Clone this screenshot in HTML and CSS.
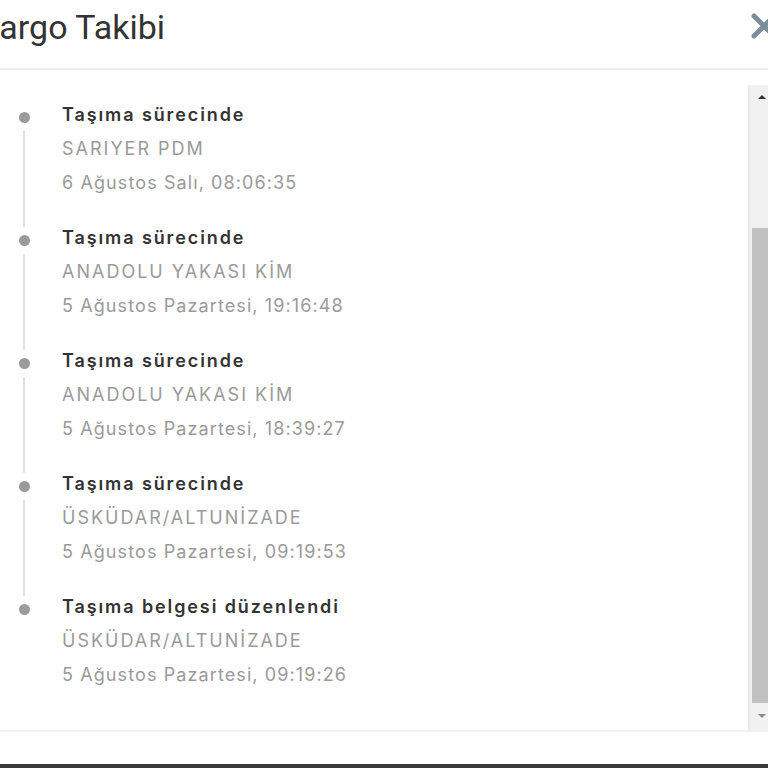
FILE: index.html
```html
<!DOCTYPE html>
<html lang="tr">
<head>
<meta charset="utf-8">
<link rel="stylesheet" href="styles.css">
</head>
<body>
<div class="modal">
  <header class="head">
    <h1 class="title">Kargo Takibi</h1>
    <svg class="close" width="28" height="28" viewBox="0 0 28 28"><path d="M4 4 L24 24 M24 4 L4 24" stroke="#7d8c9b" stroke-width="5" stroke-linecap="round"/></svg>
  </header>
  <div class="body">
    <div class="list">
      <div class="item">
        <div class="rail"><span class="dot"></span><span class="line"></span></div>
        <div class="text"><div class="status">Taşıma sürecinde</div><div class="place">SARIYER PDM</div><div class="date">6 Ağustos Salı, 08:06:35</div></div>
      </div>
      <div class="item">
        <div class="rail"><span class="dot"></span><span class="line"></span></div>
        <div class="text"><div class="status">Taşıma sürecinde</div><div class="place">ANADOLU YAKASI KİM</div><div class="date">5 Ağustos Pazartesi, 19:16:48</div></div>
      </div>
      <div class="item">
        <div class="rail"><span class="dot"></span><span class="line"></span></div>
        <div class="text"><div class="status">Taşıma sürecinde</div><div class="place">ANADOLU YAKASI KİM</div><div class="date">5 Ağustos Pazartesi, 18:39:27</div></div>
      </div>
      <div class="item">
        <div class="rail"><span class="dot"></span><span class="line"></span></div>
        <div class="text"><div class="status">Taşıma sürecinde</div><div class="place">ÜSKÜDAR/ALTUNİZADE</div><div class="date">5 Ağustos Pazartesi, 09:19:53</div></div>
      </div>
      <div class="item">
        <div class="rail"><span class="dot"></span></div>
        <div class="text"><div class="status">Taşıma belgesi düzenlendi</div><div class="place">ÜSKÜDAR/ALTUNİZADE</div><div class="date">5 Ağustos Pazartesi, 09:19:26</div></div>
      </div>
    </div>
    <div class="scrollbar">
      <div class="btn up"><span class="arrow-up"></span></div>
      <div class="track"><div class="thumb"></div></div>
      <div class="btn down"><span class="arrow-down"></span></div>
    </div>
  </div>
  <div class="foot"></div>
</div>
<div class="desk"></div>
</body>
</html>
```
FILE: styles.css
```css
html, body {
  margin: 0;
  padding: 0;
  background: #fff;
  width: 768px;
  height: 768px;
  overflow: hidden;
}
.modal {
  display: flex;
  flex-direction: column;
  height: 764px;
}
.head {
  height: 70px;
  border-bottom: 2px solid #ececec;
  display: flex;
  align-items: center;
  justify-content: space-between;
  box-sizing: border-box;
}
.title {
  margin: -14px 0 0 -22px;
  font-family: Roboto, "Liberation Sans", sans-serif;
  font-weight: 400;
  font-size: 34px;
  line-height: 40px;
  color: #333;
}
.close {
  margin: -16px -10px 0 0;
}
.body {
  display: flex;
  margin-top: 15px;
  height: 645px;
}
.list {
  flex: 1;
  padding-top: 13px;
  font-family: Inter, "Noto Sans", sans-serif;
}
.item {
  display: flex;
  height: 123px;
}
.rail {
  width: 48px;
  margin-right: 14px;
  display: flex;
  flex-direction: column;
  align-items: center;
}
.dot {
  width: 11px;
  height: 11px;
  border-radius: 50%;
  background: #9b9b9b;
  margin-top: 14px;
  flex: none;
}
.line {
  width: 2px;
  height: 96px;
  margin-top: 8px;
  background: #e0e0e0;
  flex: none;
}
.text {
  font-size: 18px;
  line-height: 34px;
  letter-spacing: 1.1px;
}
.status {
  color: #333;
  font-weight: 600;
  letter-spacing: 1.9px;
}
.place {
  color: #9a9a9a;
  letter-spacing: 2px;
}
.date {
  color: #9a9a9a;
}
.scrollbar {
  width: 18px;
  border-left: 2px solid #ececec;
  background: #f1f1f1;
  display: flex;
  flex-direction: column;
}
.btn {
  height: 23px;
  display: flex;
  align-items: center;
  justify-content: flex-end;
  padding-right: 2px;
}
.btn.down { height: 19px; align-items: flex-start; padding-top: 3px; box-sizing: border-box; }
.arrow-up {
  width: 0; height: 0;
  border-left: 4px solid transparent;
  border-right: 4px solid transparent;
  border-bottom: 4px solid #333;
}
.arrow-down {
  width: 0; height: 0;
  border-left: 4px solid transparent;
  border-right: 4px solid transparent;
  border-top: 4px solid #8a8a8a;
}
.track {
  flex: 1;
  display: flex;
  flex-direction: column;
  justify-content: flex-end;
  padding: 0 0 8px 2px;
}
.thumb {
  height: 475px;
  background: #c1c1c1;
}
.foot {
  flex: 1;
  border-top: 2px solid #f2f2f2;
}
.desk {
  height: 4px;
  background: #3a3a3a;
}
```
